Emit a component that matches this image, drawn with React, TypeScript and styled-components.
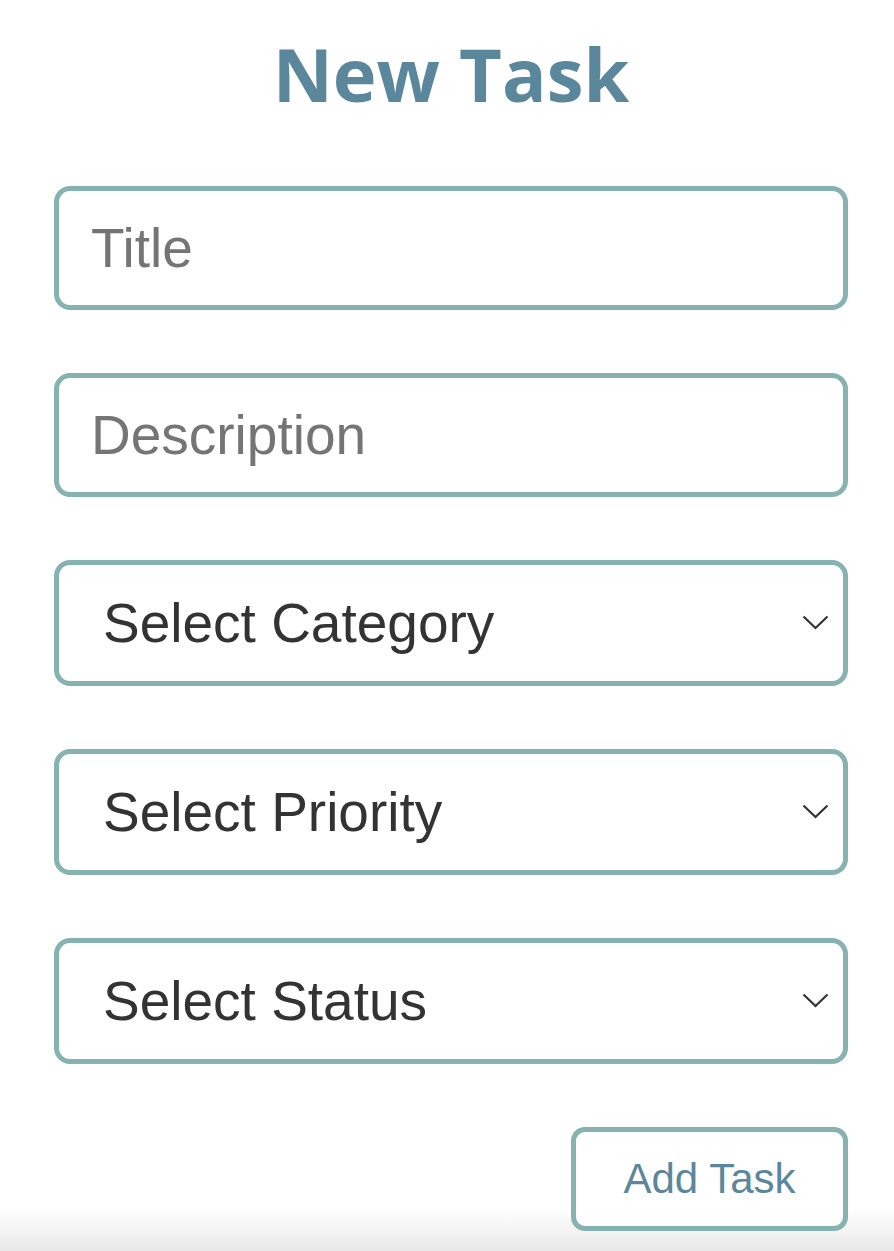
import React from 'react';
import styled, { createGlobalStyle } from 'styled-components';

const GlobalStyle = createGlobalStyle`
  * {
    box-sizing: border-box;
  }
  html,
  body {
    margin: 0;
    padding: 0;
  }
  body {
    min-height: 100vh;
    background: linear-gradient(to bottom, #ffffff calc(100% - 42px), #e8e8e8 100%);
    font-family: 'Liberation Sans', Arial, sans-serif;
  }
`;

const Page = styled.main`
  padding: 23px 46px 18px 54px;
`;

const Heading = styled.h1`
  margin: 0 0 62px;
  text-align: center;
  font-family: 'Open Sans', 'Noto Sans', sans-serif;
  font-weight: 700;
  font-size: 74px;
  color: #5b879c;
`;

const Form = styled.form`
  display: flex;
  flex-direction: column;
  gap: 63px;
`;

const TextInput = styled.input`
  display: block;
  width: 100%;
  height: 124px;
  padding: 0 32px;
  border: 5px solid #86b2b1;
  border-radius: 16px;
  background: #fff;
  font-family: 'Liberation Sans', Arial, sans-serif;
  font-size: 55px;
  color: #333;
  outline: none;

  &::placeholder {
    color: #757575;
  }
`;

const SelectWrap = styled.div`
  position: relative;
`;

const Select = styled.select`
  display: block;
  width: 100%;
  height: 126px;
  padding: 0 60px 0 44px;
  border: 5px solid #86b2b1;
  border-radius: 16px;
  background: #fff;
  appearance: none;
  font-family: 'Liberation Sans', Arial, sans-serif;
  font-size: 55px;
  color: #333;
  outline: none;
`;

const Chevron = styled.svg`
  position: absolute;
  right: 19px;
  top: 50%;
  margin-top: -8px;
  pointer-events: none;
`;

const Actions = styled.div`
  display: flex;
  justify-content: flex-end;
`;

const SubmitButton = styled.button`
  width: 277px;
  height: 104px;
  border: 5px solid #86b2b1;
  border-radius: 14px;
  background: #fff;
  font-family: 'Liberation Sans', Arial, sans-serif;
  font-size: 42px;
  color: #5b879c;
  cursor: pointer;
`;

const selects = [
  { name: 'category', label: 'Select Category' },
  { name: 'priority', label: 'Select Priority' },
  { name: 'status', label: 'Select Status' },
];

const App = () => {
  return (
    <>
      <GlobalStyle />
      <Page>
        <Heading>New Task</Heading>
        <Form onSubmit={(e) => e.preventDefault()}>
          <TextInput type="text" placeholder="Title" />
          <TextInput type="text" placeholder="Description" />
          {selects.map((s) => (
            <SelectWrap key={s.name}>
              <Select name={s.name} defaultValue="">
                <option value="">{s.label}</option>
              </Select>
              <Chevron width="27" height="15" viewBox="0 0 27 15">
                <polyline points="1.5,1.5 13.5,13 25.5,1.5" fill="none" stroke="#333" strokeWidth="2.2" />
              </Chevron>
            </SelectWrap>
          ))}
          <Actions>
            <SubmitButton type="submit">Add Task</SubmitButton>
          </Actions>
        </Form>
      </Page>
    </>
  );
};

export default App;
